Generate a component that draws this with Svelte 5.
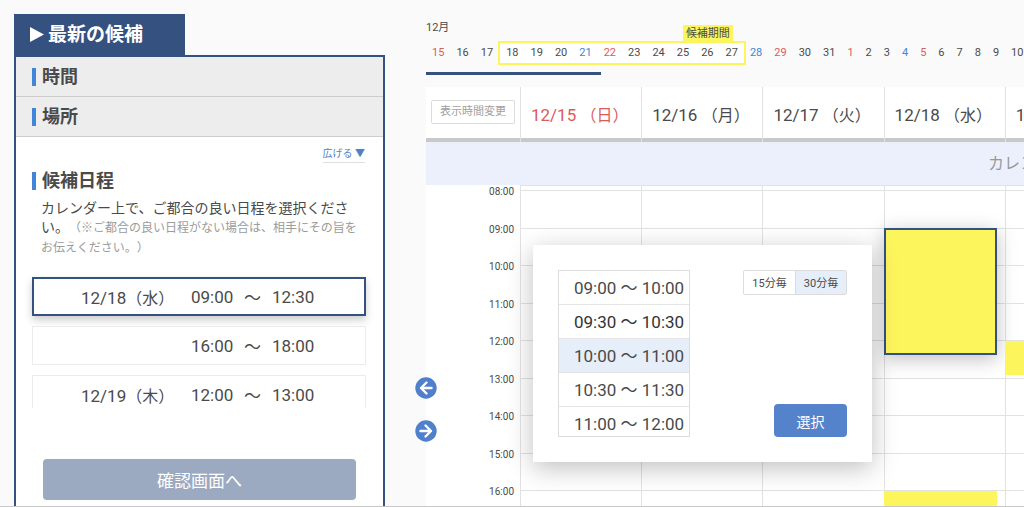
<script>
  const slots = [
    { day: '12/18', dow: '（水）', from: '09:00', to: '12:30', active: true },
    { day: '', dow: '', from: '16:00', to: '18:00' },
    { day: '12/19', dow: '（木）', from: '12:00', to: '13:00' },
  ];

  const before = [{ n: 15, tone: 'red' }, { n: 16 }, { n: 17 }];
  const range = [18, 19, 20, 21, 22, 23, 24, 25, 26, 27].map((n) => ({
    n,
    tone: n === 21 ? 'blue' : n === 22 ? 'red' : '',
  }));
  const after = [28, 29, 30, 31, 1, 2, 3, 4, 5, 6, 7, 8, 9, 10].map((n) => ({
    n,
    tone: [28, 4].includes(n) ? 'blue' : [29, 1, 5].includes(n) ? 'red' : '',
  }));

  const FIRST_HOUR = 8;
  const HOURS = 8;
  const hours = Array.from({ length: HOURS }, (_, i) => FIRST_HOUR + i);
  const label = (h) => String(h).padStart(2, '0') + ':00';

  const days = [
    { date: '12/15', dow: '日', tone: 'red', events: [] },
    { date: '12/16', dow: '月', events: [] },
    { date: '12/17', dow: '火', events: [] },
    {
      date: '12/18',
      dow: '水',
      events: [
        { start: 9, end: 12.4, selected: true },
        { start: 16, end: 18 },
      ],
    },
    { date: '12/19', dow: '木', events: [{ start: 12, end: 12.9 }] },
  ];

  const times = [
    '09:00 ～ 10:00',
    '09:30 ～ 10:30',
    '10:00 ～ 11:00',
    '10:30 ～ 11:30',
    '11:00 ～ 12:00',
  ];
  let picked = $state(2);
  let step = $state(30);
</script>

<div class="page">
  <aside class="side">
    <h1 class="tab">
      <svg width="14" height="15" viewBox="0 0 14 15" aria-hidden="true"><path d="M0 0L14 7.500L0 15Z" fill="#fff" /></svg>
      最新の候補
    </h1>
    <div class="panel">
      <h2 class="bar">時間</h2>
      <h2 class="bar">場所</h2>
      <div class="more"><a href="#expand">広げる ▼</a></div>
      <h2 class="heading">候補日程</h2>
      <p class="lead">
        カレンダー上で、ご都合の良い日程を選択ください。<small>（※ご都合の良い日程がない場合は、相手にその旨をお伝えください。）</small>
      </p>
      <ul class="slots">
        {#each slots as s}
          <li class="slot" class:active={s.active}>
            <span class="day">{s.day}<span class="dow">{s.dow}</span></span>
            <span class="from">{s.from}</span>
            <span class="wave">～</span>
            <span>{s.to}</span>
          </li>
        {/each}
      </ul>
      <button class="confirm" type="button">確認画面へ</button>
    </div>
  </aside>

  <main class="main">
    <div class="strip">
      <div class="month">12月</div>
      <div class="dates">
        {#each before as d}<span class="d {d.tone ?? ''}">{d.n}</span>{/each}
        <div class="range">
          <span class="tag">候補期間</span>
          {#each range as d}<span class="d {d.tone}">{d.n}</span>{/each}
        </div>
        <div class="after">
          {#each after as d}<span class="d {d.tone}">{d.n}</span>{/each}
        </div>
      </div>
      <div class="progress"></div>
    </div>

    <section class="calendar">
      <div class="head">
        <div class="corner"><button class="change" type="button">表示時間変更</button></div>
        <div class="days">
          {#each days as d}
            <div class="dayhead {d.tone ?? ''}">{d.date} <span class="dow">（{d.dow}）</span></div>
          {/each}
        </div>
      </div>
      <div class="banner">カレンダー</div>
      <div class="body">
        <div class="axis">
          <div class="hours">
            {#each hours as h}<span class="hour">{label(h)}</span>{/each}
          </div>
          <span class="hour">{label(FIRST_HOUR + HOURS)}</span>
        </div>
        <div class="days">
          {#each days as d}
            <div class="col">
              <div class="hours">
                {#each hours as h}<div class="cell"></div>{/each}
                {#each d.events as e}
                  <div
                    class="event"
                    class:selected={e.selected}
                    style:top="{((e.start - FIRST_HOUR) / HOURS) * 100}%"
                    style:height="{((e.end - e.start) / HOURS) * 100}%"
                  ></div>
                {/each}
              </div>
              <div class="cell last"></div>
            </div>
          {/each}
        </div>
      </div>

      <div class="nav">
        <button type="button" aria-label="前へ">
          <svg width="22" height="22" viewBox="0 0 22 22"><circle cx="11" cy="11" r="10.700" fill="#5080cc" /><path d="M11.500 5.500L6 11L11.500 16.500M6 11H16.500" /></svg>
        </button>
        <button type="button" aria-label="次へ">
          <svg width="22" height="22" viewBox="0 0 22 22"><circle cx="11" cy="11" r="10.700" fill="#5080cc" /><path d="M10.500 5.500L16 11L10.500 16.500M16 11H5.500" /></svg>
        </button>
      </div>

      <div class="popup">
        <div class="times">
          {#each times as t, i}
            <button type="button" class:on={picked === i} class:strong={i === 1} onclick={() => (picked = i)}>{t}</button>
          {/each}
        </div>
        <div class="controls">
          <div class="toggle">
            <button type="button" class:on={step === 15} onclick={() => (step = 15)}>15分毎</button>
            <button type="button" class:on={step === 30} onclick={() => (step = 30)}>30分毎</button>
          </div>
          <button class="choose" type="button">選択</button>
        </div>
      </div>
    </section>
  </main>
</div>

<style>
  :global(body) {
    margin: 0;
    background: #fafafa;
  }
  .page,
  .page * {
    box-sizing: border-box;
  }
  .page {
    display: flex;
    height: 100vh;
    overflow: hidden;
    border-bottom: 1px solid #c8c8c8;
    background: #fafafa;
    color: #4a4a4a;
    font-family: Roboto, 'Noto Sans CJK JP', sans-serif;
    font-size: 17px;
    text-spacing-trim: space-all;
  }
  button {
    margin: 0;
    padding: 0;
    border: 0;
    background: none;
    color: inherit;
    font: inherit;
    cursor: pointer;
  }
  h1,
  h2,
  p,
  ul {
    margin: 0;
    padding: 0;
  }
  .red {
    color: #dc5a5a;
  }
  .blue {
    color: #4285d6;
  }
  .dow {
    font-size: 16px;
  }

  .side {
    display: flex;
    flex: 0 0 371px;
    flex-direction: column;
    margin: 14px 0 0 14px;
  }
  .tab {
    display: flex;
    align-items: center;
    align-self: flex-start;
    gap: 4px;
    height: 41px;
    padding: 0 42px 0 16px;
    background: #35517f;
    color: #fff;
    font-size: 19px;
    line-height: 41px;
  }
  .panel {
    flex: 1 0 auto;
    border: 2px solid #35517f;
    border-bottom: 0;
    background: #fff;
  }
  h2 {
    display: flex;
    align-items: center;
    gap: 6px;
    font-size: 18px;
    line-height: 26px;
  }
  h2::before {
    content: '';
    width: 4px;
    height: 18px;
    background: #4285d6;
  }
  .bar {
    padding: 6px 16px;
    height: 40px;
    border-bottom: 1px solid #cdcdcd;
    background: #ededed;
  }
  .more {
    padding: 6px 18px 0;
    text-align: right;
    line-height: 16px;
  }
  .more a {
    display: inline-block;
    border-bottom: 1px solid #ddd;
    color: #5080cc;
    font-size: 10px;
    text-decoration: none;
  }
  .heading {
    padding: 5px 16px 0;
  }
  .lead {
    padding: 5px 18px 0 25px;
    font-size: 14px;
    line-height: 19px;
  }
  .lead small {
    color: #9b9b9b;
    font-size: 12px;
  }
  .slots {
    display: flex;
    flex-direction: column;
    gap: 10px;
    height: 137px;
    margin-top: 13px;
    padding: 6px 17px 0 16px;
    overflow: hidden;
    list-style: none;
  }
  .slot {
    display: flex;
    flex: none;
    align-items: center;
    height: 39px;
    padding-left: 48px;
    border: 1px solid #ececec;
  }
  .slot.active {
    padding-left: 47px;
    border: 2px solid #35517f;
    box-shadow: 0 4px 8px rgba(0, 0, 0, 0.2);
  }
  .day {
    width: 110px;
  }
  .from {
    width: 53px;
  }
  .wave {
    width: 28px;
  }
  .confirm {
    display: block;
    width: calc(100% - 54px);
    height: 41px;
    margin: 51px 27px 0;
    border-radius: 4px;
    background: #9ba9c1;
    color: #fff;
  }

  .main {
    display: flex;
    flex: 1 1 0;
    flex-direction: column;
    min-width: 0;
    margin-left: 41px;
  }
  .strip {
    flex: 0 0 87px;
    padding-top: 20px;
    overflow: hidden;
    font-size: 11px;
  }
  .month {
    line-height: 16px;
  }
  .dates {
    display: flex;
    align-items: center;
    height: 24px;
    margin-top: 5px;
  }
  .after {
    display: flex;
    margin-left: -2px;
  }
  .d {
    flex: none;
    padding: 0 6px;
    line-height: 20px;
  }
  .range {
    position: relative;
    display: flex;
    flex: none;
    margin-left: -1px;
    border: 2px solid #fdf55c;
    background: #fff;
  }
  .tag {
    position: absolute;
    right: 11px;
    bottom: 100%;
    padding: 0 3px;
    background: #fdf55c;
    line-height: 18px;
    white-space: nowrap;
  }
  .progress {
    width: 175px;
    height: 3px;
    margin-top: 7px;
    background: #35517f;
  }

  .calendar {
    position: relative;
    flex: 1 1 0;
    background: #fff;
  }
  .head,
  .body {
    display: flex;
  }
  .head,
  .body,
  .banner {
    clip-path: inset(0);
  }
  .head {
    height: 55px;
    border-bottom: 4px solid #c9c9c9;
  }
  .corner,
  .axis {
    flex: 0 0 94px;
  }
  .corner {
    padding: 13px 5px 0;
  }
  .change {
    display: block;
    width: 100%;
    height: 24px;
    border: 1px solid #dcdcdc;
    border-radius: 2px;
    color: #a0a0a0;
    font-size: 11px;
    line-height: 22px;
  }
  .days {
    display: grid;
    flex: 0 0 606px;
    grid-template-columns: repeat(5, 1fr);
  }
  .dayhead {
    padding-left: 10px;
    border-left: 1px solid #e2e2e2;
    line-height: 56px;
    white-space: nowrap;
  }
  .banner {
    height: 43px;
    padding-left: 562px;
    overflow: hidden;
    background: #ebf0fc;
    color: #999;
    font-size: 16px;
    line-height: 43px;
    white-space: nowrap;
  }
  .hours {
    position: relative;
    display: grid;
    grid-template-rows: repeat(8, 1fr);
    height: 300px;
  }
  .axis {
    padding: 0 6px 0 0;
    font-size: 10px;
    line-height: 13px;
    text-align: right;
  }
  .col {
    padding-top: 4px;
    border-top: 1px solid #e2e2e2;
    border-left: 1px solid #e2e2e2;
  }
  .cell {
    border-top: 1px solid #e2e2e2;
  }
  .last {
    height: 37px;
  }
  .event {
    position: absolute;
    left: -1px;
    width: 113px;
    margin-top: 1px;
    background: #fdf55c;
  }
  .event.selected {
    margin-top: 0;
    border: 2px solid #35517f;
    box-shadow: 0 4px 18px rgba(0, 0, 0, 0.25);
  }

  .nav {
    position: absolute;
    top: 290px;
    left: -11px;
    display: grid;
    gap: 21px;
  }
  .nav button {
    height: 22px;
  }
  .nav svg {
    display: block;
  }
  .nav path {
    fill: none;
    stroke: #fff;
    stroke-width: 2.4;
    stroke-linecap: round;
    stroke-linejoin: round;
  }

  .popup {
    position: absolute;
    top: 158px;
    left: 107px;
    display: flex;
    justify-content: space-between;
    width: 339px;
    padding: 25px;
    background: #fff;
    box-shadow: 0 6px 24px rgba(0, 0, 0, 0.25);
  }
  .times {
    width: 132px;
    height: 167px;
    overflow: hidden;
    border: 1px solid #dcdcdc;
  }
  .times button {
    display: block;
    width: 100%;
    height: 34px;
    padding: 0 0 2px 15px;
    border-bottom: 1px solid #e6e6e6;
    text-align: left;
    white-space: nowrap;
  }
  .times .strong {
    color: #333;
  }
  .times .on,
  .toggle .on {
    background: #e6eef9;
  }
  .controls {
    display: flex;
    flex-direction: column;
    align-items: flex-end;
    justify-content: space-between;
  }
  .toggle {
    display: flex;
    border: 1px solid #dcdcdc;
    border-radius: 2px;
  }
  .toggle button {
    width: 51px;
    height: 23px;
    padding-bottom: 2px;
    font-size: 11px;
  }
  .toggle button + button {
    border-left: 1px solid #dcdcdc;
  }
  .choose {
    width: 73px;
    height: 33px;
    border-radius: 4px;
    background: #5583cb;
    color: #fff;
    font-size: 14px;
  }
</style>
